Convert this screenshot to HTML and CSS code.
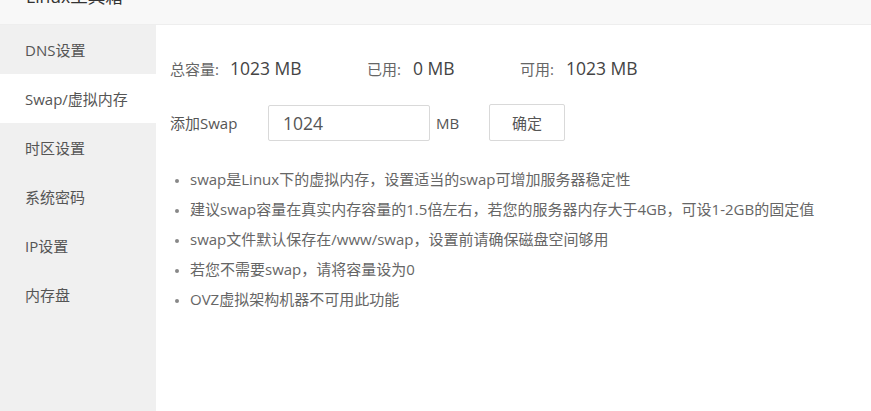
FILE: index.html
```html
<!DOCTYPE html>
<html lang="zh-CN">
<head>
<meta charset="utf-8">
<title>Linux工具箱</title>
<link rel="stylesheet" href="styles.css">
</head>
<body>
<div class="header"><div class="title">Linux工具箱</div></div>
<div class="layout">
  <ul class="side">
    <li class="item">DNS设置</li>
    <li class="item active">Swap/虚拟内存</li>
    <li class="item">时区设置</li>
    <li class="item">系统密码</li>
    <li class="item">IP设置</li>
    <li class="item">内存盘</li>
  </ul>
  <div class="main">
    <div class="stats">
      <div class="stat stat-total"><span class="lbl lbl-wide">总容量:</span><span class="val">1023 MB</span></div>
      <div class="stat stat-used"><span class="lbl">已用:</span><span class="val">0 MB</span></div>
      <div class="stat"><span class="lbl">可用:</span><span class="val">1023 MB</span></div>
    </div>
    <div class="form">
      <span class="flabel">添加Swap</span>
      <input class="inp" type="text" value="1024">
      <span class="unit">MB</span>
      <button class="btn">确定</button>
    </div>
    <ul class="tips">
      <li>swap是Linux下的虚拟内存，设置适当的swap可增加服务器稳定性</li>
      <li>建议swap容量在真实内存容量的1.5倍左右，若您的服务器内存大于4GB，可设1-2GB的固定值</li>
      <li>swap文件默认保存在/www/swap，设置前请确保磁盘空间够用</li>
      <li>若您不需要swap，请将容量设为0</li>
      <li>OVZ虚拟架构机器不可用此功能</li>
    </ul>
  </div>
</div>
</body>
</html>
```
FILE: styles.css
```css
* { box-sizing: border-box; }
html, body { margin: 0; padding: 0; }
body {
  width: 871px;
  height: 411px;
  overflow: hidden;
  background: #fff;
  font-family: "Open Sans", "Noto Sans CJK SC", sans-serif;
  color: #666;
}
.header {
  height: 25px;
  background: #f8f8f8;
  border-bottom: 1px solid #eeeeee;
  overflow: hidden;
  padding-left: 26px;
}
.title {
  font-size: 17.5px;
  line-height: 22px;
  margin-top: -15px;
  color: #333;
}
.layout {
  display: flex;
  height: 386px;
}
.side {
  list-style: none;
  margin: 0;
  padding: 0;
  width: 156px;
  background: #f0f0f0;
  flex: none;
}
.item {
  height: 49px;
  line-height: 50px;
  padding-left: 25px;
  font-size: 15px;
  color: #555;
}
.item.active { background: #fff; }
.main {
  flex: 1;
  padding: 31px 0 0 14px;
}
.stats {
  display: flex;
  align-items: baseline;
  height: 24px;
}
.stat { display: flex; align-items: baseline; }
.stat-total { width: 197px; }
.stat-used { width: 153px; }
.lbl { font-size: 15px; color: #666; width: 46px; }
.lbl-wide { width: 60px; }
.val { font-size: 17.5px; color: #444; }
.form {
  display: flex;
  align-items: center;
  margin-top: 24px;
  height: 37px;
}
.flabel { font-size: 15px; color: #555; width: 98px; }
.inp {
  width: 162px;
  height: 36px;
  border: 1px solid #d9d9d9;
  border-radius: 2px;
  padding: 0 14px;
  font: inherit;
  font-size: 17.5px;
  color: #555;
  outline: none;
}
.unit { font-size: 15px; color: #555; margin-left: 6px; width: 53px; }
.btn {
  width: 76px;
  height: 37px;
  border: 1px solid #d9d9d9;
  border-radius: 2px;
  background: #fff;
  font: inherit;
  font-size: 15px;
  color: #555;
  padding: 0;
}
.tips {
  margin: 23px 0 0 0;
  padding: 0 0 0 20px;
  font-size: 15px;
  color: #666;
}
.tips li {
  line-height: 30px;
  padding-left: 0;
}
.tips li::marker { color: #888; font-size: 11px; }
```
